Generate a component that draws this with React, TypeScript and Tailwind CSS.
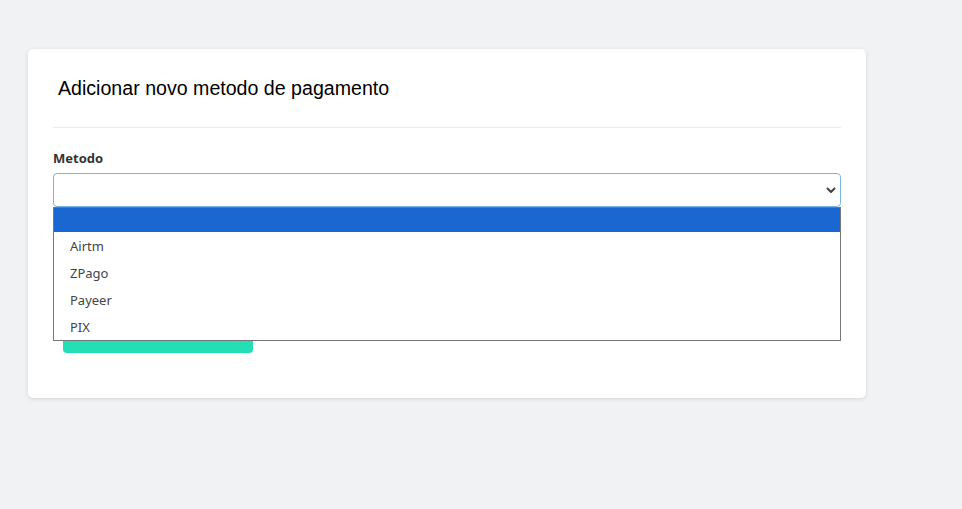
export default function App() {
  const options = ["Airtm", "ZPago", "Payeer", "PIX"];

  return (
    <div className="min-h-screen bg-[#f1f2f4] pl-[28px] pt-[49px]">
      <div className="w-[838px] rounded-[5px] bg-white px-[25px] pt-[26px] pb-[45px] shadow-[0_1px_4px_rgba(0,0,0,0.12)]">
        <div className="border-b border-[#ececec] pb-[25px] pl-[5px]">
          <h2 className="h-[27px] font-['Liberation_Sans',Arial,sans-serif] text-[19.6px] leading-[27px] text-black">
            Adicionar novo metodo de pagamento
          </h2>
        </div>

        <label className="mt-[20px] mb-[5px] block font-['Noto_Sans',sans-serif] text-[13px] font-bold leading-[20px] text-[#333]">
          Metodo
        </label>

        <div className="relative">
          <div className="flex h-[34px] items-center justify-end rounded-[4px] border border-[#7eb3e6] bg-white pr-[3px]">
            <svg width="12" height="12" viewBox="0 0 12 12" className="text-[#444]">
              <path d="M2.5 4.5 6 8l3.5-3.5" fill="none" stroke="currentColor" strokeWidth="2" strokeLinecap="round" strokeLinejoin="round" />
            </svg>
          </div>

          <div className="absolute left-0 top-[34px] z-10 w-[788px] border border-[#767676] bg-white font-['Noto_Sans',sans-serif] text-[13px] text-[#444]">
            <div className="h-[24px] bg-[#1a67d2]" />
            {options.map((o) => (
              <div key={o} className="flex h-[27px] items-center pl-[16px] pt-[2px]">
                {o}
              </div>
            ))}
          </div>
        </div>

        <button className="mt-[112px] ml-[10px] block h-[34px] w-[190px] rounded-[4px] bg-[#24dfb6] text-white" />
      </div>
    </div>
  );
}
